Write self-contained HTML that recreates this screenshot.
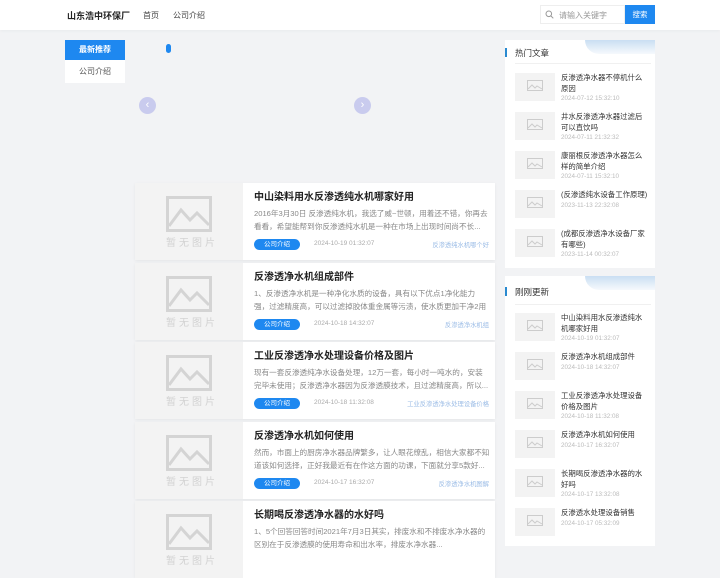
<!DOCTYPE html>
<html><head><meta charset="utf-8"><style>
*{margin:0;padding:0;box-sizing:border-box}
body{width:720px;height:540px;overflow:hidden;background:#f2f3f5;font-family:"Liberation Sans","Noto Sans CJK SC",sans-serif;color:#333;position:relative}
.a{position:absolute}
.hdr{left:0;top:0;width:720px;height:30px;background:#fff;box-shadow:0 1px 3px rgba(0,0,0,.04)}
.logo{left:67px;top:9px;font-size:9px;font-weight:bold;color:#222}
.nav{top:10px;font-size:8px;color:#444}
.search{left:540px;top:5px;width:85px;height:19px;border:1px solid #eee;background:#fff;font-size:8px;color:#999;padding:4px 0 0 18px}
.btn{left:625px;top:5px;width:30px;height:19px;background:#1e88f0;color:#fff;font-size:7.5px;text-align:center;line-height:19px}
.tab1{left:65px;top:40px;width:60px;height:20px;background:#1e88f0;color:#fff;font-size:8px;font-weight:bold;text-align:center;line-height:20px}
.tab2{left:65px;top:60px;width:60px;height:23px;background:#fff;color:#555;font-size:8px;text-align:center;line-height:23px}
.arrow{width:17px;height:17px;border-radius:50%;background:#c9cbee;color:#fff;font-size:11px;text-align:center;line-height:16px}
.card{left:135px;width:360px;height:77px;background:#fff;box-shadow:0 1px 3px rgba(0,0,0,.06)}
.img{position:absolute;left:0;top:0;width:108px;height:77px;background:#f3f3f3}
.img svg{position:absolute;left:31px;top:13px}
.img span{position:absolute;left:31px;top:51px;font-size:10px;color:#d2d2d2;letter-spacing:3px}
.t{position:absolute;left:119px;top:5px;font-size:10px;font-weight:bold;color:#222;white-space:nowrap}
.x{position:absolute;left:119px;top:24px;width:236px;font-size:7.6px;line-height:13px;color:#888;height:26px;overflow:hidden}
.tag{position:absolute;left:119px;top:56px;width:46px;height:11px;border-radius:6px;background:#1e88f0;color:#fff;font-size:6.5px;text-align:center;line-height:11px}
.d{position:absolute;left:179px;top:57px;font-size:6.5px;color:#aaa}
.r{position:absolute;right:6px;top:57px;font-size:6.3px;color:#9bbce6}
.side{left:505px;width:150px;background:#fff}
.sky{position:absolute;right:0;top:0;width:70px;height:14px;background:linear-gradient(180deg,#bcd6ef,#f4f8fc);border-radius:0 0 0 30px;opacity:.8}
.sh{position:absolute;left:10px;font-size:8.5px;color:#333;padding-left:0}
.bar{position:absolute;left:0;width:2px;height:9px;background:#2a8ad0}
.line{position:absolute;left:10px;width:136px;height:1px;background:#f0f0f0}
.it{position:absolute;left:10px;width:140px;height:30px}
.th{position:absolute;left:0;top:0;width:40px;height:28px;background:#f3f3f3}
.th svg{position:absolute;left:12px;top:7px}
.it b{position:absolute;left:46px;top:-1px;width:88px;font-weight:normal;font-size:7.4px;line-height:11px;color:#333}
.it i{position:absolute;left:46px;font-style:normal;font-size:6.3px;color:#bbb}
</style></head><body>
<div class="a hdr"></div>
<div class="a logo">山东浩中环保厂</div>
<div class="a nav" style="left:143px">首页</div>
<div class="a nav" style="left:173px">公司介绍</div>
<div class="a search">请输入关键字</div>
<svg class="a" style="left:545px;top:10px" width="9" height="9" viewBox="0 0 9 9"><circle cx="3.8" cy="3.8" r="2.8" fill="none" stroke="#999" stroke-width="1"/><path d="M6 6L8.3 8.3" stroke="#999"/></svg>
<div class="a btn">搜索</div>
<div class="a tab1">最新推荐</div>
<div class="a tab2">公司介绍</div>
<div class="a" style="left:166px;top:44px;width:5px;height:9px;border-radius:3px;background:#1e88f0"></div>
<div class="a arrow" style="left:139px;top:97px">‹</div>
<div class="a arrow" style="left:354px;top:97px">›</div>

<div class="a card" style="top:183px"><div class="img"><svg width="46" height="36" viewBox="0 0 46 36"><rect x="1.5" y="1.5" width="43" height="33" fill="none" stroke="#d4d4d4" stroke-width="3"/><path d="M3 30L15 14L24 24L31 17L43 29" fill="none" stroke="#d4d4d4" stroke-width="3"/></svg><span>暂无图片</span></div><div class="t">中山染料用水反渗透纯水机哪家好用</div><div class="x">2016年3月30日 反渗透纯水机，我选了威~世顿，用着还不错，你再去看看，希望能帮到你反渗透纯水机是一种在市场上出现时间尚不长...</div><div class="tag">公司介绍</div><div class="d">2024-10-19 01:32:07</div><div class="r">反渗透纯水机哪个好</div></div>
<div class="a card" style="top:263px"><div class="img"><svg width="46" height="36" viewBox="0 0 46 36"><rect x="1.5" y="1.5" width="43" height="33" fill="none" stroke="#d4d4d4" stroke-width="3"/><path d="M3 30L15 14L24 24L31 17L43 29" fill="none" stroke="#d4d4d4" stroke-width="3"/></svg><span>暂无图片</span></div><div class="t">反渗透净水机组成部件</div><div class="x">1、反渗透净水机是一种净化水质的设备，具有以下优点1净化能力强，过滤精度高，可以过滤掉胶体重金属等污渍，使水质更加干净2用水...</div><div class="tag">公司介绍</div><div class="d">2024-10-18 14:32:07</div><div class="r">反渗透净水机组</div></div>
<div class="a card" style="top:342px"><div class="img"><svg width="46" height="36" viewBox="0 0 46 36"><rect x="1.5" y="1.5" width="43" height="33" fill="none" stroke="#d4d4d4" stroke-width="3"/><path d="M3 30L15 14L24 24L31 17L43 29" fill="none" stroke="#d4d4d4" stroke-width="3"/></svg><span>暂无图片</span></div><div class="t">工业反渗透净水处理设备价格及图片</div><div class="x">现有一套反渗透纯净水设备处理，12万一套，每小时一吨水的，安装完毕未使用；反渗透净水器因为反渗透膜技术，且过滤精度高，所以...</div><div class="tag">公司介绍</div><div class="d">2024-10-18 11:32:08</div><div class="r">工业反渗透净水处理设备价格</div></div>
<div class="a card" style="top:422px"><div class="img"><svg width="46" height="36" viewBox="0 0 46 36"><rect x="1.5" y="1.5" width="43" height="33" fill="none" stroke="#d4d4d4" stroke-width="3"/><path d="M3 30L15 14L24 24L31 17L43 29" fill="none" stroke="#d4d4d4" stroke-width="3"/></svg><span>暂无图片</span></div><div class="t">反渗透净水机如何使用</div><div class="x">然而，市面上的厨房净水器品牌繁多，让人眼花缭乱，相信大家都不知道该如何选择，正好我最近有在作这方面的功课，下面就分享5款好...</div><div class="tag">公司介绍</div><div class="d">2024-10-17 16:32:07</div><div class="r">反渗透净水机图解</div></div>
<div class="a card" style="top:501px"><div class="img"><svg width="46" height="36" viewBox="0 0 46 36"><rect x="1.5" y="1.5" width="43" height="33" fill="none" stroke="#d4d4d4" stroke-width="3"/><path d="M3 30L15 14L24 24L31 17L43 29" fill="none" stroke="#d4d4d4" stroke-width="3"/></svg><span>暂无图片</span></div><div class="t">长期喝反渗透净水器的水好吗</div><div class="x">1、5个回答回答时间2021年7月3日其实，排废水和不排废水净水器的区别在于反渗透膜的使用寿命和出水率，排废水净水器...</div></div>

<div class="a side" style="top:40px;height:228px"><div class="sky"></div><div class="bar" style="top:8px"></div><div class="sh" style="top:7px">热门文章</div><div class="line" style="top:23px"></div>
<div class="it" style="top:33px"><div class="th"><svg width="16" height="13" viewBox="0 0 16 13"><rect x=".5" y=".5" width="15" height="10" fill="none" stroke="#ccc"/><path d="M1 9L5 5L8 8L10 6L15 9" fill="none" stroke="#ccc"/></svg></div><b>反渗透净水器不停机什么原因</b><i style="top:22px">2024-07-12 15:32:10</i></div>
<div class="it" style="top:72px"><div class="th"><svg width="16" height="13" viewBox="0 0 16 13"><rect x=".5" y=".5" width="15" height="10" fill="none" stroke="#ccc"/><path d="M1 9L5 5L8 8L10 6L15 9" fill="none" stroke="#ccc"/></svg></div><b>井水反渗透净水器过滤后可以直饮吗</b><i style="top:22px">2024-07-11 21:32:32</i></div>
<div class="it" style="top:111px"><div class="th"><svg width="16" height="13" viewBox="0 0 16 13"><rect x=".5" y=".5" width="15" height="10" fill="none" stroke="#ccc"/><path d="M1 9L5 5L8 8L10 6L15 9" fill="none" stroke="#ccc"/></svg></div><b>康丽根反渗透净水器怎么样的简单介绍</b><i style="top:22px">2024-07-11 15:32:10</i></div>
<div class="it" style="top:150px"><div class="th"><svg width="16" height="13" viewBox="0 0 16 13"><rect x=".5" y=".5" width="15" height="10" fill="none" stroke="#ccc"/><path d="M1 9L5 5L8 8L10 6L15 9" fill="none" stroke="#ccc"/></svg></div><b>(反渗透纯水设备工作原理)</b><i style="top:12px">2023-11-13 22:32:08</i></div>
<div class="it" style="top:189px"><div class="th"><svg width="16" height="13" viewBox="0 0 16 13"><rect x=".5" y=".5" width="15" height="10" fill="none" stroke="#ccc"/><path d="M1 9L5 5L8 8L10 6L15 9" fill="none" stroke="#ccc"/></svg></div><b>(成都反渗透净水设备厂家有哪些)</b><i style="top:22px">2023-11-14 00:32:07</i></div>
</div>

<div class="a side" style="top:276px;height:270px"><div class="sky"></div><div class="bar" style="top:11px"></div><div class="sh" style="top:10px">刚刚更新</div><div class="line" style="top:28px"></div>
<div class="it" style="top:37px"><div class="th"><svg width="16" height="13" viewBox="0 0 16 13"><rect x=".5" y=".5" width="15" height="10" fill="none" stroke="#ccc"/><path d="M1 9L5 5L8 8L10 6L15 9" fill="none" stroke="#ccc"/></svg></div><b>中山染料用水反渗透纯水机哪家好用</b><i style="top:22px">2024-10-19 01:32:07</i></div>
<div class="it" style="top:76px"><div class="th"><svg width="16" height="13" viewBox="0 0 16 13"><rect x=".5" y=".5" width="15" height="10" fill="none" stroke="#ccc"/><path d="M1 9L5 5L8 8L10 6L15 9" fill="none" stroke="#ccc"/></svg></div><b>反渗透净水机组成部件</b><i style="top:12px">2024-10-18 14:32:07</i></div>
<div class="it" style="top:115px"><div class="th"><svg width="16" height="13" viewBox="0 0 16 13"><rect x=".5" y=".5" width="15" height="10" fill="none" stroke="#ccc"/><path d="M1 9L5 5L8 8L10 6L15 9" fill="none" stroke="#ccc"/></svg></div><b>工业反渗透净水处理设备价格及图片</b><i style="top:22px">2024-10-18 11:32:08</i></div>
<div class="it" style="top:154px"><div class="th"><svg width="16" height="13" viewBox="0 0 16 13"><rect x=".5" y=".5" width="15" height="10" fill="none" stroke="#ccc"/><path d="M1 9L5 5L8 8L10 6L15 9" fill="none" stroke="#ccc"/></svg></div><b>反渗透净水机如何使用</b><i style="top:12px">2024-10-17 16:32:07</i></div>
<div class="it" style="top:193px"><div class="th"><svg width="16" height="13" viewBox="0 0 16 13"><rect x=".5" y=".5" width="15" height="10" fill="none" stroke="#ccc"/><path d="M1 9L5 5L8 8L10 6L15 9" fill="none" stroke="#ccc"/></svg></div><b>长期喝反渗透净水器的水好吗</b><i style="top:22px">2024-10-17 13:32:08</i></div>
<div class="it" style="top:232px"><div class="th"><svg width="16" height="13" viewBox="0 0 16 13"><rect x=".5" y=".5" width="15" height="10" fill="none" stroke="#ccc"/><path d="M1 9L5 5L8 8L10 6L15 9" fill="none" stroke="#ccc"/></svg></div><b>反渗透水处理设备销售</b><i style="top:12px">2024-10-17 05:32:09</i></div>
</div>
</body></html>
